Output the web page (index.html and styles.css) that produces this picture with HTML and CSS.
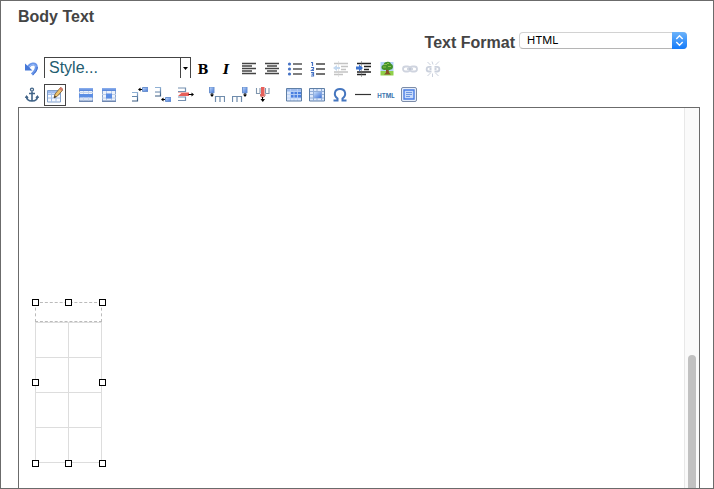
FILE: index.html
```html
<!DOCTYPE html>
<html lang="en">
<head>
  <meta charset="UTF-8" />
  <meta name="viewport" content="width=device-width, initial-scale=1.0" />
  <title>Body Text</title>
  <link rel="stylesheet" href="styles.css">
</head>
<body>
  <svg class="defs" aria-hidden="true">
    <defs>
      <linearGradient id="blue" x1="0" y1="0" x2="1" y2="1">
        <stop offset="0" stop-color="#c4dcfb" />
        <stop offset="1" stop-color="#3f72d6" />
      </linearGradient>
      <linearGradient id="head" x1="0" y1="0" x2="0" y2="1">
        <stop offset="0" stop-color="#8fb2ee" />
        <stop offset="1" stop-color="#5482d8" />
      </linearGradient>
      <linearGradient id="steel" x1="0" y1="0" x2="0" y2="1">
        <stop offset="0" stop-color="#8fb0d4" />
        <stop offset="1" stop-color="#37587e" />
      </linearGradient>
    </defs>
  </svg>

  <h2>Body Text</h2>

  <div class="format">
    <label for="textFormat">Text Format</label>
    <div class="format-select">
      <select id="textFormat">
        <option>HTML</option>
      </select>
      <span class="stepper">
        <svg viewBox="0 0 14 16"><path d="M4 6.5 7 3.5l3 3M4 9.5l3 3 3-3" fill="none" stroke="#fff" stroke-width="1.3" /></svg>
      </span>
    </div>
  </div>

  <div class="toolbar">
    <div class="row row-top">
      <button title="Undo">
        <svg viewBox="0 0 16 16"><path d="M4 6.500C6.500 2.500 11.500 1.500 12.300 5.500c.5 3-1.800 5.500-4.300 8" fill="none" stroke="#6b97ea" stroke-width="3" /><path d="M5 6C7.500 3.200 11 2.700 11.600 5.500" fill="none" stroke="#9dbdf5" stroke-width="1" /><path d="M1 2.500V9.500h7.500z" fill="#4678d8" /><path d="M13.300 6c.2 3-2 5.500-4.500 7.800" fill="none" stroke="#3f6cc9" stroke-width="1" /></svg>
      </button>
      <div class="style-select">
        <select aria-label="Style">
          <option>Style...</option>
        </select>
        <span class="drop"><svg viewBox="0 0 9 20"><path d="M2 9h5L4.500 12z" fill="#000" /></svg></span>
      </div>
      <button class="bold" title="Bold">B</button>
      <button class="italic" title="Italic">I</button>
      <button title="Align left">
        <svg viewBox="0 0 16 16"><path d="M1 2.500h14M1 5h10M1 7.500h14M1 10h10M1 12.500h14" stroke="#444" stroke-width="1.300" /></svg>
      </button>
      <button title="Align center">
        <svg viewBox="0 0 16 16"><path d="M1 2.500h14M3 5h10M1 7.500h14M3 10h10M1 12.500h14" stroke="#444" stroke-width="1.300" /></svg>
      </button>
      <button title="Bullet list">
        <svg viewBox="0 0 16 16"><path d="M6 3h9M6 8h9M6 13h9" stroke="#555" stroke-width="1.300" /><g fill="#4672c4"><circle cx="2.500" cy="3" r="1.600" /><circle cx="2.500" cy="8" r="1.600" /><circle cx="2.500" cy="13" r="1.600" /></g></svg>
      </button>
      <button title="Numbered list">
        <svg viewBox="0 0 16 16"><path d="M6 3h9M6 8h9M6 13h9" stroke="#444" stroke-width="1.300" /><path d="M1 1.500h1.500v3.500M1 6.500h2.500v1.500L1.500 9.500h2.500M1 11.500h2.500v3.500H1M1.500 13.200h2" fill="none" stroke="#4672c4" stroke-width="1.200" /></svg>
      </button>
      <button title="Outdent">
        <svg viewBox="0 0 16 16"><path d="M1 2.500h14M8 5.500h7M8 8.500h5M1 11h14M1 13.500h9" stroke="#c3c3c3" stroke-width="1.500" /><path d="M5.500 .5v15" stroke="#d0d0d0" stroke-dasharray="1 1" /><path d="M0 7l4-3v2h3v2H4v2z" fill="#c3d8ef" /></svg>
      </button>
      <button title="Indent">
        <svg viewBox="0 0 16 16"><path d="M1 2.500h14M8 5.500h7M8 8.500h5M1 11h14M1 13.500h9" stroke="#222" stroke-width="1.600" /><path d="M5.500 .5v15" stroke="#666" stroke-dasharray="1 1" /><path d="M7 7 3 3.500v2H0v3h3v2z" fill="#3e74d0" /></svg>
      </button>
      <button title="Insert image">
        <svg viewBox="0 0 16 16"><path d="M1.500 1h13v9h-13z" fill="#b4d3f7" /><path d="M1.500 10h13v4.500h-13z" fill="#8fd04a" /><path d="M7 8h2.500l.5 3.500 2 2H5l2-2z" fill="#875126" /><path d="M7.500 1c2.500-1 4.500.3 4.500 2 2.500.5 2.800 5-.2 5.500-1.800 1.200-3.500.8-4.300 0-2.500 1.300-5 .2-5-2 0-1.800 1-2.500 2-2.500.3-1.800 1.500-2.900 3-3z" fill="#43932a" /><path d="M5 3.500h3M9 5.500h3M4 6h3M8 2.500h2" stroke="#8dc04b" /></svg>
      </button>
      <button title="Insert link">
        <svg viewBox="0 0 16 16" fill="none" stroke="#cfd4df" stroke-width="1.800"><rect x="1" y="5.500" width="7" height="5" rx="2.500" /><rect x="8" y="5.500" width="7" height="5" rx="2.500" /><path d="M5 8h6" stroke="#b8c0cf" stroke-width="1.300" /></svg>
      </button>
      <button title="Unlink">
        <svg viewBox="0 0 16 16" fill="none" stroke="#cbd1dd" stroke-width="1.800"><path d="M6.500 5.800H4a2.300 2.300 0 0 0 0 4.700h2.500M9.500 5.800H12a2.300 2.300 0 0 1 0 4.700H9.500M4.500 8h2M9.500 8h2" /><path d="M7 .5 8 3.500M2.500 1l3 3M14 .5l-3.500 3.500M7.500 12.500V16M5.500 12l-3 3M10.500 12l3 3" stroke-width="1" /></svg>
      </button>
    </div>

    <div class="row">
      <button title="Anchor">
        <svg viewBox="0 0 16 16" fill="none" stroke="#426488" stroke-width="1.600"><circle cx="8" cy="2.600" r="1.500" stroke-width="1.300" /><path d="M8 4.500V14M5 6.500h6M2.500 9c0 3.500 2.500 5 5.500 5s5.500-1.500 5.500-5" /><path d="M.8 11 2.500 8l2.200 3zM11.300 11l2.200-3 1.700 3z" fill="#426488" stroke="none" /></svg>
      </button>
      <button class="active" title="Table">
        <svg viewBox="0 0 16 16"><path d="M.5 3.500h13v11.500H.5z" fill="#f7faff" stroke="#809fc9" /><path d="M1 4h12v2.500H1z" fill="#9cbaf0" /><path d="M1 7.500h12M1 11h12M4.500 4v11M9 4v11" stroke="#a5c0ea" /><path d="m7 11 1-4 5.500-6.500L16 2.700 10.500 9z" fill="#edc36d" stroke="#78572b" stroke-width=".8" /><path d="m12.300 1.800 1.700-1.800L16 2l-1.500 2z" fill="#d3786b" /><path d="m7 11 .7-2.500L9.300 10z" fill="#333" /></svg>
      </button>
      <span class="sep"></span>
      <button title="Table row properties">
        <svg viewBox="0 0 16 16"><path d="M1.500 1.500h13v12.500h-13z" fill="#edf2fb" stroke="#8ca7d2" /><path d="M1 1h14v3H1z" fill="url(#head)" /><path d="M1 7h14v3.500H1z" fill="#5c8ee4" /><path d="M1 5.500h14M1 12h14M5.500 4v3M10.500 4v3M5.500 10.500V14M10.500 10.500V14" stroke="#c8d5eb" /><path d="M1 14.300h14" stroke="#5873a0" /></svg>
      </button>
      <button title="Table cell properties">
        <svg viewBox="0 0 16 16"><path d="M1.500 1.500h13v12.500h-13z" fill="#edf2fb" stroke="#8ca7d2" /><path d="M1 1h14v3H1z" fill="url(#head)" /><path d="M1 7.500h14M1 11h14M5.500 4v10M10.500 4v10" stroke="#bccce6" /><path d="M5 6.500h6v5H5z" fill="#5b8de4" /><path d="M1 14.300h14" stroke="#5873a0" /></svg>
      </button>
      <span class="sep"></span>
      <button title="Insert row before">
        <svg viewBox="0 0 16 16"><path d="M0 5.500h5.500v8.500H0M0 9.500h5" fill="none" stroke="url(#steel)" stroke-width="1.200" /><path d="M8 2.500h3" stroke="#000" /><path d="M6 2.500 8.500.5v4z" /><path d="M10.500.5H16V4.500h-5.500z" fill="url(#blue)" stroke="#6d93d0" /></svg>
      </button>
      <button title="Insert row after">
        <svg viewBox="0 0 16 16"><path d="M0 .5h5.500V9H0M0 5h5" fill="none" stroke="url(#steel)" stroke-width="1.200" /><path d="M8 12.500h3" stroke="#000" /><path d="m6 12.500 2.500-2v4z" /><path d="M10.500 10.500H16v4h-5.500z" fill="url(#blue)" stroke="#6d93d0" /></svg>
      </button>
      <button title="Delete row">
        <svg viewBox="0 0 16 16"><path d="M0 1h7.500v3.500H0M0 13.500h7.500V10H0" fill="none" stroke="#7590b0" stroke-width="1.200" /><path d="M0 9 4 5.500h7V9z" fill="#e8605a" /><path d="M0 5.500h7" stroke="#efb4b0" /><path d="M10.500 7.500H14" stroke="#000" /><path d="m13.500 5.500 2.500 2-2.500 2z" /></svg>
      </button>
      <span class="sep"></span>
      <button title="Insert column before">
        <svg viewBox="0 0 16 16"><path d="M6.500 15V9.500h9V15M11 9.500V15" fill="none" stroke="#6f8cac" stroke-width="1.200" /><path d="M.5 0h4.500v6H.5z" fill="url(#blue)" stroke="#6d93d0" /><path d="M3 6v3" stroke="#000" /><path d="M1 7.500h4L3 10z" /></svg>
      </button>
      <button title="Insert column after">
        <svg viewBox="0 0 16 16"><path d="M.5 15V9.500h9V15M5 9.500V15" fill="none" stroke="#6f8cac" stroke-width="1.200" /><path d="M10.500 0H15v6h-4.500z" fill="url(#blue)" stroke="#6d93d0" /><path d="M13 6v3" stroke="#000" /><path d="M11 7.500h4L13 10z" /></svg>
      </button>
      <button title="Delete column">
        <svg viewBox="0 0 16 16"><path d="M1.500 1v5.500H5M14 1v5.500h-3.500M5 1v5.500M10.500 1v5.500" fill="none" stroke="#7f95ad" stroke-width="1.100" /><path d="M6 0h3.500v9L6 10z" fill="#e8605a" /><path d="M5.500 7v2L7.500 11 10 9V7" fill="none" stroke="#bd7773" /><path d="M7.500 10v3" stroke="#000" /><path d="M5.500 12h4.500l-2.200 3z" /></svg>
      </button>
      <span class="sep"></span>
      <button title="Split cells">
        <svg viewBox="0 0 16 16"><path d="M.5 1.500h15v12.500H.5z" fill="#dce8fb" /><path d="M1 2h14v2.500H1z" fill="#9ebbed" /><path d="M5 4.500h10V11H5z" fill="#4a7fe0" /><path d="M1 4.500h14M1 7.500h14M1 11h14M4.500 2v12M8 4v10M11.500 2v12" stroke="#b9d0f6" stroke-width=".9" /><path d="M.5 1.500h15v12.500H.5z" fill="none" stroke="#5f7fa6" /></svg>
      </button>
      <button title="Merge cells">
        <svg viewBox="0 0 16 16"><path d="M.5 1.500h15v12.500H.5z" fill="#dce8fb" stroke="#5f7fa6" /><path d="M1 4.500h14M1 7.500h3M12 7.500h3M1 11h14M4.500 2v12M8 2v12M12.500 2v12" stroke="#90add9" /><path d="M5 5h7.500v6H5z" fill="url(#blue)" /></svg>
      </button>
      <button title="Special character">
        <svg viewBox="0 0 16 16"><path d="M1.500 13.500h4v-2C1 8 2.500 2 8 2s7 6 2.500 9.500v2h4" fill="none" stroke="#4576bf" stroke-width="2" /></svg>
      </button>
      <button title="Horizontal line">
        <svg viewBox="0 0 16 16"><path d="M0 7.500h16" stroke="#333" stroke-width="1.200" /></svg>
      </button>
      <button class="html" title="Edit HTML source">HTML</button>
      <button title="Toggle fullscreen">
        <svg viewBox="0 0 16 16"><rect x=".5" y=".5" width="15" height="14" rx="1.500" fill="#e6eefb" stroke="#7c8ca8" /><path d="M3 3h10v9H3z" fill="#c9dbfa" stroke="#4a7de4" stroke-width="1.400" /><path d="M5 5.500h6M5 7.500h6M5 9.500h4" stroke="#6e97e2" /></svg>
      </button>
    </div>
  </div>

  <div class="editor">
    <div class="content">
      <div class="selection">
        <table>
          <caption></caption>
          <tr><td></td><td></td></tr>
          <tr><td></td><td></td></tr>
          <tr><td></td><td></td></tr>
          <tr><td></td><td></td></tr>
        </table>
        <i class="handle top left"></i>
        <i class="handle top center"></i>
        <i class="handle top right"></i>
        <i class="handle middle left"></i>
        <i class="handle middle right"></i>
        <i class="handle bottom left"></i>
        <i class="handle bottom center"></i>
        <i class="handle bottom right"></i>
      </div>
    </div>
    <div class="scrollbar"><div class="thumb"></div></div>
  </div>
</body>
</html>
```
FILE: styles.css
```css
* {
  box-sizing: border-box;
}
body {
  margin: 0;
  height: 100vh;
  display: flex;
  flex-direction: column;
  padding: 6px 13px 0 17px;
  border: 1px solid #6b6b6b;
  overflow: hidden;
  background-color: #fff;
  color: #444;
  font-family: "Liberation Sans", Arial, sans-serif;
  font-size: 16px;
}
.defs {
  position: absolute;
  width: 0;
  height: 0;
}
h2 {
  margin: 0;
  font-size: 16px;
  line-height: 20px;
}
.format {
  display: flex;
  justify-content: flex-end;
  gap: 4px;
  height: 25px;
  margin: 5px 13px 0 0;
  font-weight: bold;
}
.format label {
  line-height: 22px;
}
.format-select {
  position: relative;
  width: 168px;
  height: 17px;
}
.format-select select {
  display: block;
  width: 100%;
  height: 17px;
  padding: 0 20px 0 7px;
  appearance: none;
  border: 1px solid #d2d2d2;
  border-bottom-color: #b5b5b5;
  border-radius: 4px;
  background-color: #fff;
  color: #000;
  font-family: Inter, sans-serif;
  font-size: 11px;
  line-height: 15px;
}
.stepper {
  position: absolute;
  top: 0;
  right: 0;
  width: 15px;
  height: 17px;
  border-radius: 0 4px 4px 0;
  background: linear-gradient(#6cb3fa, #147bfa);
  pointer-events: none;
}
.stepper svg {
  display: block;
  width: 15px;
  height: 17px;
}
.toolbar {
  padding: 0 0 1px 3px;
}
.row {
  display: flex;
  align-items: center;
  gap: 1px;
  height: 22px;
}
.row-top {
  height: 24px;
  margin-bottom: 3px;
}
.row button {
  display: flex;
  flex: none;
  align-items: center;
  justify-content: center;
  width: 22px;
  height: 22px;
  padding: 0;
  border: 1px solid transparent;
  background: none;
  color: #000;
}
.row button svg {
  flex: none;
  width: 16px;
  height: 16px;
}
.row button.active {
  border-color: #444;
}
.row .bold {
  font: bold 13px "DejaVu Serif", serif;
}
.row .italic {
  font: italic bold 13px "DejaVu Serif", serif;
}
.row .html {
  color: #3a74ad;
  font: bold 6px Inter, sans-serif;
}
.sep {
  flex: none;
  width: 7px;
}
.style-select {
  position: relative;
  align-self: flex-start;
  width: 147px;
  height: 21px;
}
.style-select select {
  display: block;
  width: 100%;
  height: 21px;
  padding: 0 12px 0 4px;
  appearance: none;
  border: 1px solid #444;
  border-bottom: none;
  border-radius: 0;
  background-color: #fff;
  color: #235c70;
  font-family: inherit;
  font-size: 16px;
  line-height: 20px;
}
.drop {
  position: absolute;
  top: 1px;
  right: 1px;
  width: 10px;
  height: 20px;
  border-left: 1px solid #444;
  pointer-events: none;
}
.drop svg {
  display: block;
  width: 9px;
  height: 20px;
}
.editor {
  display: flex;
  flex: 1;
  min-height: 0;
  border: 1px solid #6b6b6b;
  border-bottom: none;
}
.content {
  flex: 1;
  padding: 194px 16px 0;
}
.selection {
  position: relative;
  width: 67px;
}
.selection table {
  width: 67px;
  border-collapse: collapse;
}
.selection caption {
  height: 20px;
  border: 1px dashed #bbb;
}
.selection td {
  height: 35px;
  padding: 0;
  border: 1px solid #ddd;
}
.handle {
  position: absolute;
  width: 7px;
  height: 7px;
  border: 1px solid #000;
  background-color: #fff;
}
.top {
  top: -3px;
}
.middle {
  top: calc(50% - 4px);
}
.bottom {
  bottom: -4px;
}
.left {
  left: -3px;
}
.center {
  left: calc(50% - 4px);
}
.right {
  right: -4px;
}
.scrollbar {
  display: flex;
  align-items: flex-end;
  width: 15px;
  padding: 0 3px;
  border-left: 1px solid #e8e8e8;
  background-color: #fafafa;
}
.thumb {
  width: 8px;
  height: 35%;
  border-radius: 4px 4px 0 0;
  background-color: #c1c1c1;
}
```
